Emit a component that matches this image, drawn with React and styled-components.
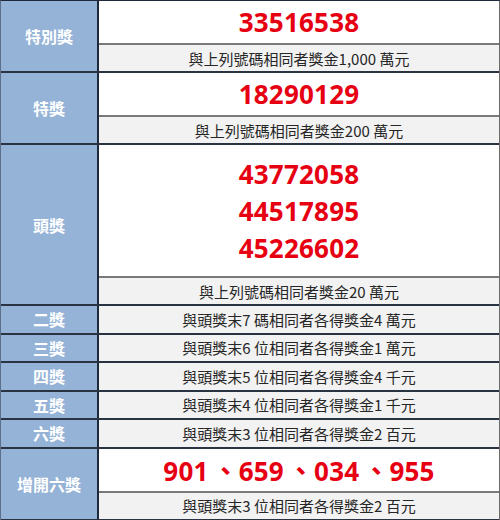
import React from 'react'
import styled, { createGlobalStyle } from 'styled-components'

const GlobalStyle = createGlobalStyle`
    html, body {
        margin: 0;
        padding: 0;
        background: #ffffff;
    }
`

const prizes = [
    { label: '特別獎', numbers: ['33516538'], desc: '與上列號碼相同者獎金1,000 萬元' },
    { label: '特獎', numbers: ['18290129'], desc: '與上列號碼相同者獎金200 萬元' },
    { label: '頭獎', numbers: ['43772058', '44517895', '45226602'], desc: '與上列號碼相同者獎金20 萬元' },
    { label: '二獎', desc: '與頭獎末7 碼相同者各得獎金4 萬元' },
    { label: '三獎', desc: '與頭獎末6 位相同者各得獎金1 萬元' },
    { label: '四獎', desc: '與頭獎末5 位相同者各得獎金4 千元' },
    { label: '五獎', desc: '與頭獎末4 位相同者各得獎金1 千元' },
    { label: '六獎', desc: '與頭獎末3 位相同者各得獎金2 百元' },
    { label: '增開六獎', numbers: ['901 、659 、034 、955'], desc: '與頭獎末3 位相同者各得獎金2 百元' },
]

const App = () => {
  return (
    <>
      <GlobalStyle />
      <Table>
        {prizes.map((p) => (
          <Group key={p.label}>
            <Label>{p.label}</Label>
            <Content>
              {p.numbers && (
                <Numbers multi={p.numbers.length > 1}>
                  {p.numbers.map((n) => (
                    <Number key={n} multi={p.numbers.length > 1}>{n}</Number>
                  ))}
                </Numbers>
              )}
              <Desc single={!p.numbers}>{p.desc}</Desc>
            </Content>
          </Group>
        ))}
      </Table>
    </>
  )
}

const Table = styled.div`
    width: 498px;
    border-top: 1px solid #1e2a3c;
    border-left: 1px solid #5a6f8c;
    border-right: 2px solid #6b6b6b;
    display: flex;
    flex-direction: column;
    font-family: "Noto Sans", "Noto Sans CJK TC", sans-serif;
`

const Group = styled.div`
    display: flex;
    border-bottom: 2px solid #2a3342;
`

const Label = styled.div`
    width: 96px;
    flex-shrink: 0;
    background: #95b3d7;
    border-right: 2px solid #1e2a3c;
    display: flex;
    align-items: center;
    justify-content: center;
    color: #ffffff;
    font-family: "Noto Sans CJK TC", sans-serif;
    font-weight: 700;
    font-size: 16px;
`

const Content = styled.div`
    flex: 1;
    display: flex;
    flex-direction: column;
`

const Numbers = styled.div`
    background: #ffffff;
    border-bottom: 2px solid #7a7a7a;
    padding: ${(p) => (p.multi ? '10px 0' : '0')};
    display: flex;
    flex-direction: column;
`

const Number = styled.div`
    height: ${(p) => (p.multi ? '37px' : '42px')};
    display: flex;
    align-items: center;
    justify-content: center;
    color: #e60012;
    font-weight: 700;
    font-size: 26px;
    letter-spacing: 0.2px;
    word-spacing: -3px;
`

const Desc = styled.div`
    height: ${(p) => (p.single ? '26.5px' : '26px')};
    background: #f2f2f2;
    display: flex;
    align-items: center;
    justify-content: center;
    color: #262626;
    font-family: "Noto Sans CJK TC", sans-serif;
    font-size: 15px;
`

export default App
